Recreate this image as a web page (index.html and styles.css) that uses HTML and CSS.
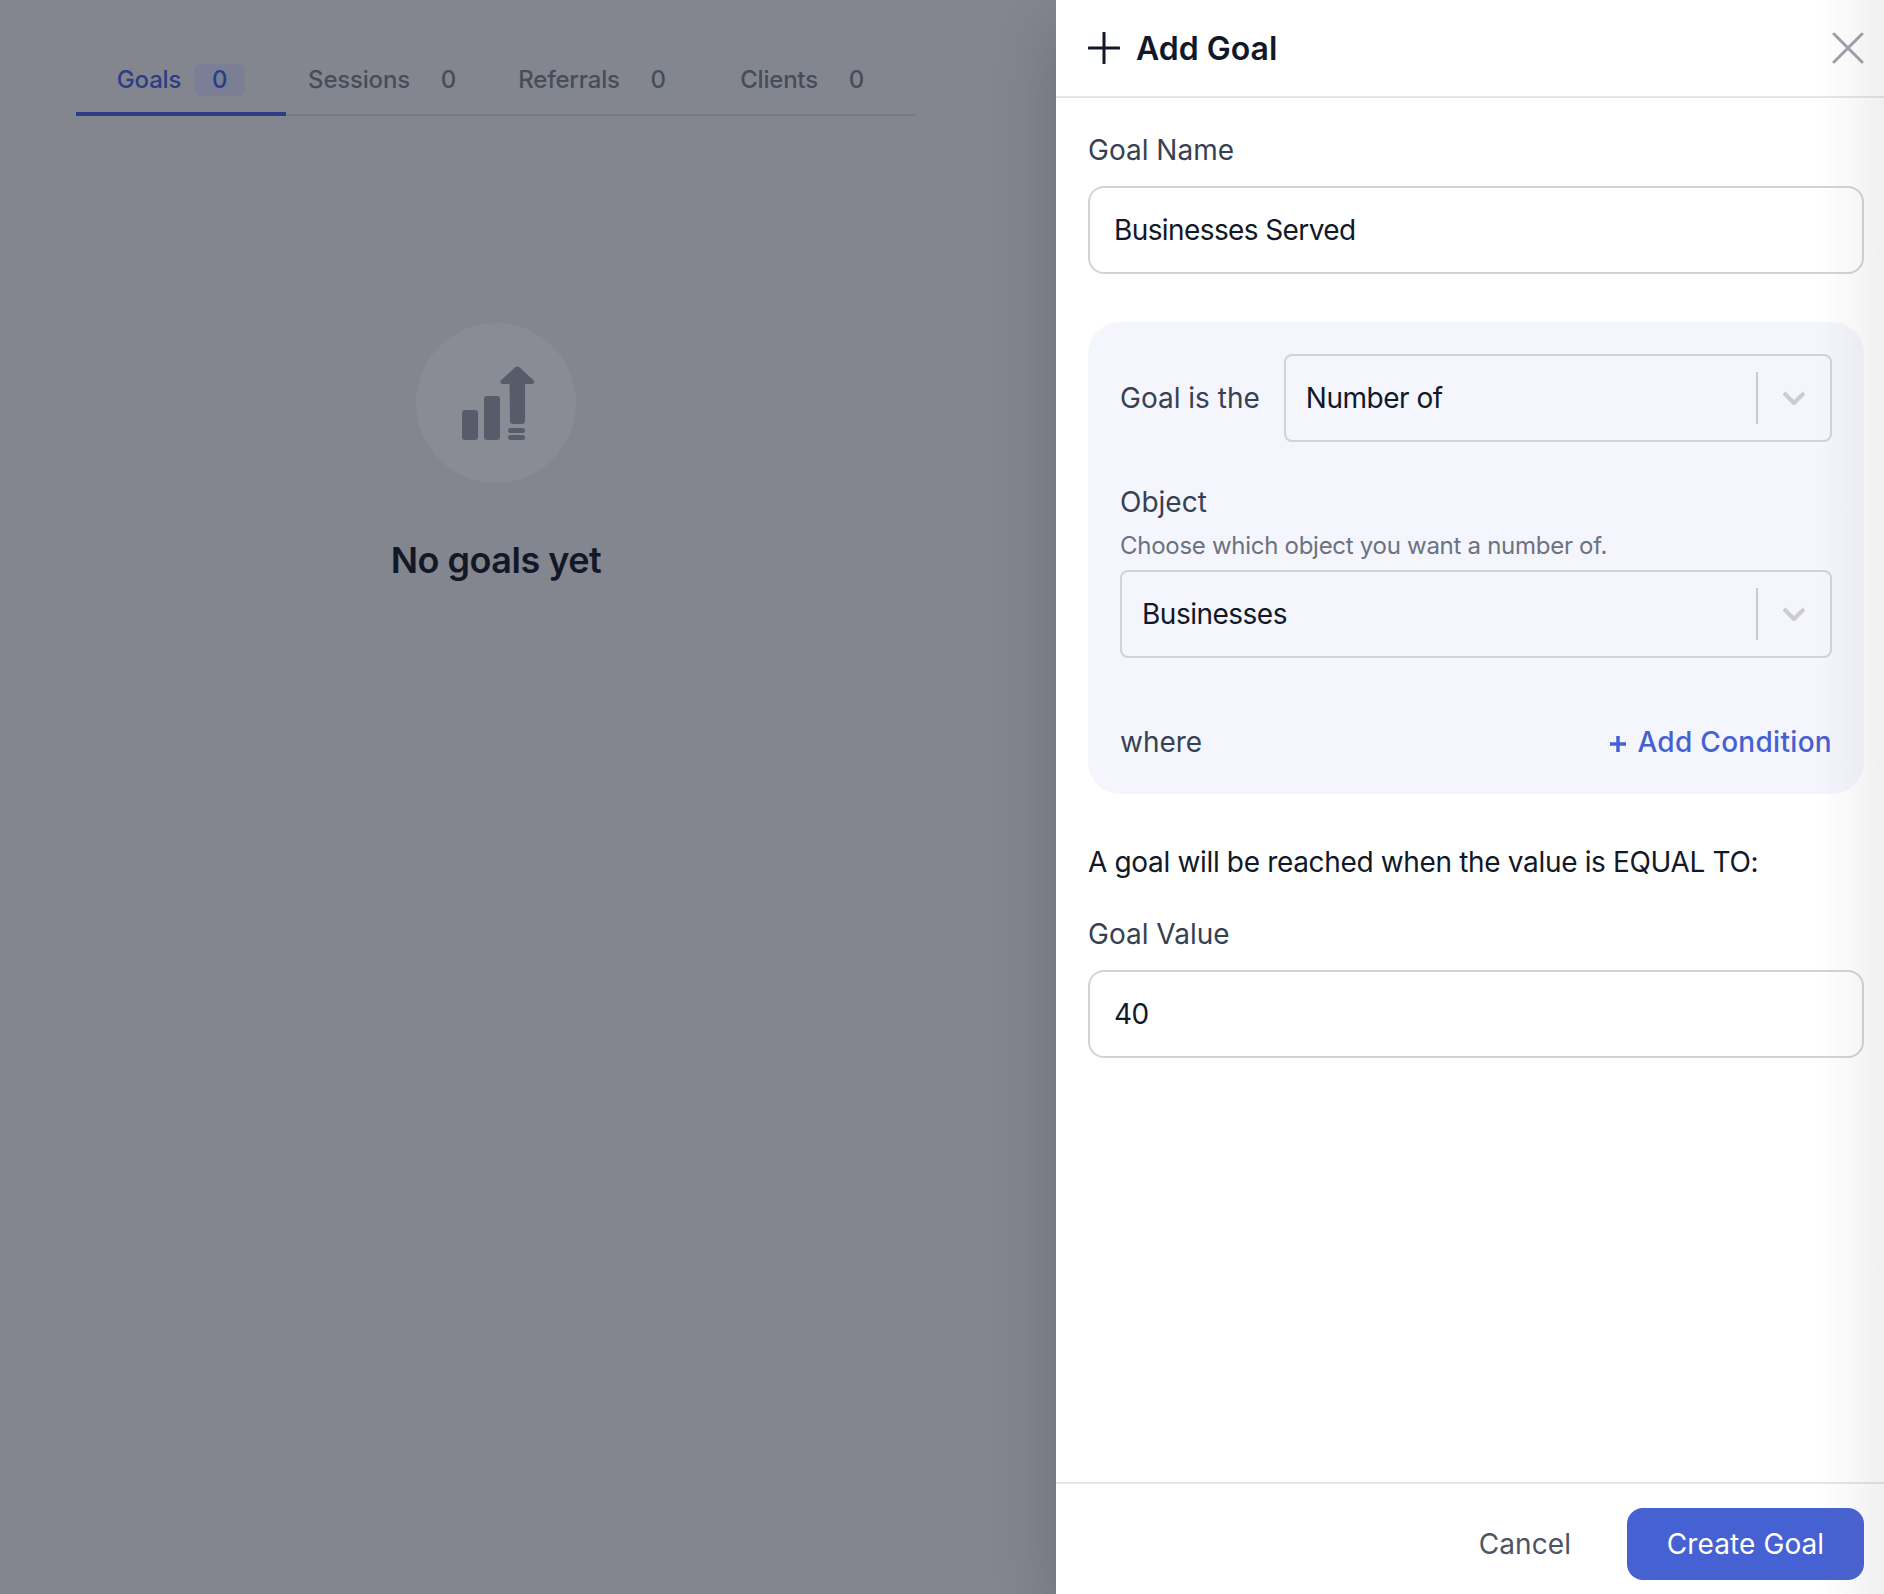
FILE: index.html
```html
<!DOCTYPE html>
<html lang="en">
<head>
<meta charset="utf-8">
<title>Add Goal</title>
<link rel="stylesheet" href="styles.css">
</head>
<body>
<div class="app">
  <main class="backdrop">
    <nav class="tabs">
      <div class="tab tab-active"><span>Goals</span><span class="badge">0</span></div>
      <div class="tab"><span>Sessions</span><span class="badge">0</span></div>
      <div class="tab"><span>Referrals</span><span class="badge">0</span></div>
      <div class="tab"><span>Clients</span><span class="badge">0</span></div>
    </nav>
    <section class="empty">
      <div class="empty-circle">
        <svg class="empty-icon" viewBox="0 0 80 80" width="80" height="80" aria-hidden="true">
          <rect x="6" y="47" width="16" height="30" rx="3"/>
          <rect x="28" y="33" width="16" height="44" rx="3"/>
          <path d="M53.500 21h-7c-2 0-3-2-1.600-3.400l14-13.200c1.500-1.300 3.300-1.300 4.800 0l14 13.200c1.400 1.400.4 3.400-1.600 3.400h-7v37c0 1.700-1.300 3-3 3h-9.100c-1.700 0-3-1.300-3-3z"/>
          <rect x="52" y="65" width="17" height="5" rx="2.500"/>
          <rect x="52" y="72" width="17" height="5" rx="2.500"/>
        </svg>
      </div>
      <h2 class="empty-title">No goals yet</h2>
    </section>
  </main>
  <aside class="panel">
    <header class="panel-head">
      <div class="panel-title">
        <svg class="plus-icon" viewBox="0 0 32 32" width="32" height="32" aria-hidden="true"><path d="M16 1v30M1 16h30"/></svg>
        <h1>Add Goal</h1>
      </div>
      <svg class="close-icon" viewBox="0 0 32 32" width="32" height="32" aria-hidden="true"><path d="M2 2l28 28M30 2L2 30"/></svg>
    </header>
    <div class="panel-body">
      <label class="label label-name">Goal Name</label>
      <div class="input">Businesses Served</div>
      <div class="card">
        <div class="goal-row">
          <span class="label">Goal is the</span>
          <div class="select select-grow">
            <span>Number of</span>
            <span class="select-sep"></span>
            <svg class="chevron" viewBox="0 0 24 14" width="24" height="14" aria-hidden="true"><path d="M2 2l10 10L22 2"/></svg>
          </div>
        </div>
        <div class="label label-object">Object</div>
        <div class="help">Choose which object you want a number of.</div>
        <div class="select">
          <span>Businesses</span>
          <span class="select-sep"></span>
          <svg class="chevron" viewBox="0 0 24 14" width="24" height="14" aria-hidden="true"><path d="M2 2l10 10L22 2"/></svg>
        </div>
        <div class="where-row">
          <span class="label">where</span>
          <span class="add-condition">
            <svg class="add-icon" viewBox="0 0 18 18" width="18" height="18" aria-hidden="true"><path d="M9 1v16M1 9h16"/></svg>
            Add Condition
          </span>
        </div>
      </div>
      <p class="statement">A goal will be reached when the value is EQUAL TO:</p>
      <label class="label label-value">Goal Value</label>
      <div class="input">40</div>
    </div>
    <footer class="panel-foot">
      <span class="cancel">Cancel</span>
      <span class="create">Create Goal</span>
    </footer>
    <div class="edge-fade"></div>
  </aside>
</div>
</body>
</html>
```
FILE: styles.css
```css
* { box-sizing: border-box; }
html, body { margin: 0; height: 100%; }
body {
  font-family: Inter, "Noto Sans", "Liberation Sans", sans-serif;
  color: #111827;
  overflow: hidden;
}
.app { display: flex; width: 1884px; height: 1594px; }

.backdrop {
  width: 1056px;
  flex: none;
  background: #83868f;
  display: flex;
  flex-direction: column;
  padding-left: 76px;
}
.tabs {
  display: flex;
  width: 840px;
  height: 116px;
  border-bottom: 2px solid #797b88;
}
.tab {
  flex: 0 0 210px;
  height: 116px;
  padding-top: 64px;
  display: flex;
  justify-content: center;
  gap: 13px;
  font-size: 24px;
  font-weight: 500;
  letter-spacing: -0.2px;
  color: #484c5a;
  line-height: 32px;
}
.tab-active { color: #2c3c85; border-bottom: 4px solid #2c3c85; }
.badge {
  width: 51px;
  height: 32px;
  border-radius: 8px;
  text-align: center;
}
.tab-active .badge { background: #7a7f95; }

.empty {
  width: 840px;
  display: flex;
  flex-direction: column;
  align-items: center;
}
.empty-circle {
  width: 160px;
  height: 160px;
  margin-top: 207px;
  border-radius: 50%;
  background: #8a8c95;
  display: flex;
  align-items: center;
  justify-content: center;
}
.empty-icon { fill: #575c6b; }
.empty-title {
  margin: 51px 0 0;
  font-size: 36px;
  line-height: 52px;
  font-weight: 600;
  letter-spacing: -0.5px;
  color: #131828;
}

.panel {
  position: relative;
  flex: 1;
  background: #fff;
  display: flex;
  flex-direction: column;
  box-shadow: 0 25px 60px rgba(0, 0, 0, 0.18);
}
.panel-head {
  height: 98px;
  flex: none;
  border-bottom: 2px solid #e5e6eb;
  padding: 0 20px 0 32px;
  display: flex;
  align-items: center;
  justify-content: space-between;
}
.panel-title { display: flex; align-items: center; gap: 16px; }
.panel-title h1 {
  margin: 0;
  padding-top: 2px;
  font-size: 32px;
  line-height: 40px;
  font-weight: 600;
  color: #111827;
}
.plus-icon { fill: none; stroke: #111827; stroke-width: 3; stroke-linecap: round; }
.close-icon { fill: none; stroke: #9ca0aa; stroke-width: 3; stroke-linecap: round; }

.panel-body { flex: 1; padding: 34px 20px 0 32px; }
.label {
  display: block;
  font-size: 28px;
  line-height: 36px;
  color: #374151;
}
.label-name { margin-bottom: 18px; }
.input {
  height: 88px;
  padding: 0 24px;
  display: flex;
  align-items: center;
  border: 2px solid #d1d3db;
  border-radius: 16px;
  background: #fff;
  font-size: 28px;
  letter-spacing: -0.6px;
  color: #111827;
}
.card {
  margin-top: 48px;
  height: 472px;
  padding: 32px;
  background: #f4f5fd;
  border-radius: 32px;
}
.goal-row { display: flex; align-items: center; gap: 24px; }
.goal-row .label { white-space: nowrap; }
.select {
  height: 88px;
  padding: 0 20px;
  display: flex;
  align-items: center;
  border: 2px solid #d1d3db;
  border-radius: 8px;
  font-size: 28px;
  letter-spacing: -0.5px;
  color: #111827;
}
.select-grow { flex: 1; }
.select > span:first-child { flex: 1; }
.select-sep { width: 2px; height: 52px; background: #c9cad0; margin-right: 24px; }
.chevron { fill: none; stroke: #cccccc; stroke-width: 4; margin-right: 4px; }
.label-object { margin-top: 42px; }
.help {
  margin-top: 8px;
  margin-bottom: 6px;
  font-size: 24px;
  line-height: 36px;
  letter-spacing: -0.28px;
  color: #6b7280;
}
.where-row {
  margin-top: 66px;
  display: flex;
  align-items: center;
  justify-content: space-between;
}
.add-condition {
  display: flex;
  align-items: center;
  gap: 10px;
  font-size: 28px;
  font-weight: 500;
  line-height: 36px;
  letter-spacing: 0.3px;
  color: #4661d1;
}
.add-icon { fill: none; stroke: #4661d1; stroke-width: 3.500; margin-top: 3px; }
.statement {
  margin: 50px 0 0;
  font-size: 28px;
  line-height: 36px;
  letter-spacing: -0.34px;
  color: #111827;
}
.label-value { margin-top: 36px; margin-bottom: 18px; }

.panel-foot {
  flex: none;
  height: 112px;
  border-top: 2px solid #e5e6eb;
  padding: 24px 20px 0 32px;
  display: flex;
  justify-content: flex-end;
  align-items: flex-start;
  gap: 56px;
}
.cancel {
  height: 72px;
  display: flex;
  align-items: center;
  font-size: 28px;
  letter-spacing: 0.06px;
  color: #4b5563;
}
.create {
  width: 237px;
  height: 72px;
  border-radius: 16px;
  background: #4661d1;
  color: #fff;
  display: flex;
  align-items: center;
  justify-content: center;
  font-size: 28px;
  letter-spacing: 0.1px;
}
.edge-fade {
  position: absolute;
  top: 0;
  right: 0;
  bottom: 0;
  width: 64px;
  pointer-events: none;
  background: linear-gradient(to right, rgba(120, 120, 130, 0), rgba(120, 120, 130, 0.11));
}
```
